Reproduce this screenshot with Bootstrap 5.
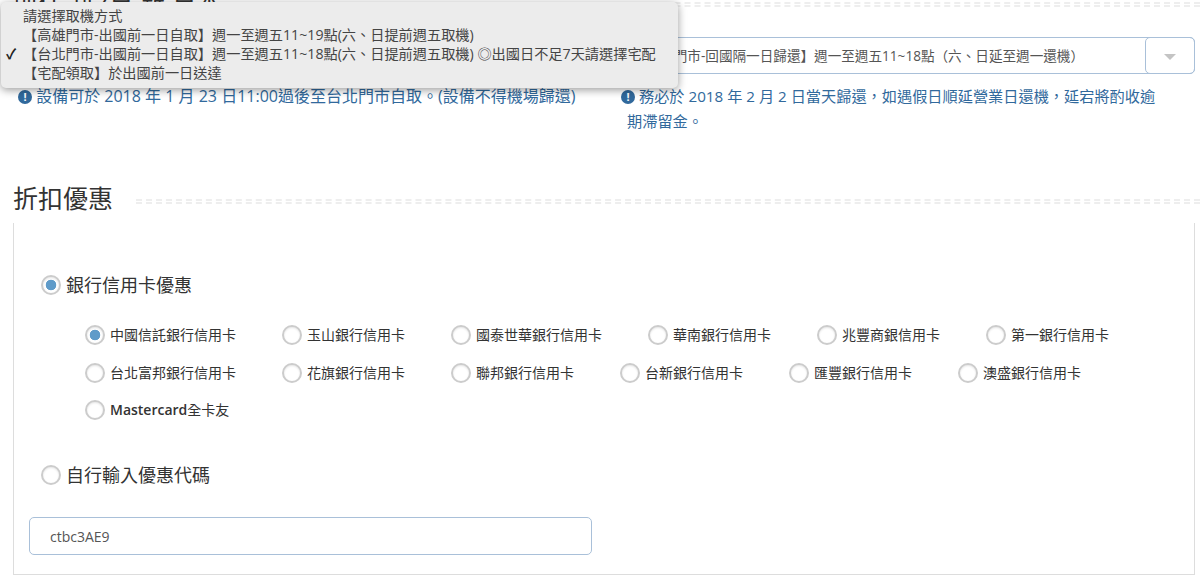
<!DOCTYPE html>
<html lang="zh-Hant">
<head>
  <meta charset="UTF-8">
  <meta name="viewport" content="width=device-width, initial-scale=1.0">
  <title>折扣優惠</title>
  <link rel="stylesheet" href="https://cdn.jsdelivr.net/npm/bootstrap@5.3.0/dist/css/bootstrap.min.css">
  <style>
    body {
      font-family: "Open Sans", "Noto Sans CJK TC", sans-serif;
      color: #333;
      overflow: hidden;
      height: 582px;
    }
    .page-wrap {
      position: relative;
      height: 582px;
      overflow: hidden;
    }
    .sec-head {
      display: flex;
      align-items: center;
      margin-left: 13px;
    }
    .sec-title {
      font-size: 25px;
      line-height: 34px;
      padding-right: 23px;
      white-space: nowrap;
    }
    .sec-rule {
      flex: 1;
      height: 5px;
      margin-top: 6px;
      border-top: 2px dashed #eee;
      border-bottom: 2px dashed #eee;
    }
    .head-top {
      margin-top: -16px;
    }
    .head-discount {
      margin-top: 47px;
    }
    .pick-row {
      margin-top: 19px;
      padding-left: 600px;
    }
    .fake-select {
      height: 37px;
      width: 595px;
      border: 1px solid #a9c0d9;
      border-radius: 5px;
      font-size: 13.6px;
      line-height: 35px;
      padding-left: 32px;
      color: #555;
      position: relative;
      white-space: nowrap;
    }
    .fake-arrow {
      position: absolute;
      right: -1px;
      top: -1px;
      width: 50px;
      height: 37px;
      border: 1px solid #a9c0d9;
      border-radius: 5px;
    }
    .fake-arrow::after {
      content: "";
      position: absolute;
      left: 18px;
      top: 16px;
      border-left: 6px solid transparent;
      border-right: 6px solid transparent;
      border-top: 6px solid #c4c4c4;
    }
    .note-row {
      margin-top: 10px;
      color: #31699c;
      line-height: 25px;
    }
    .note-left {
      width: 620px;
      padding-left: 18px;
      font-size: 16px;
    }
    .note-right {
      width: 548px;
      padding: 0 6px 0 7px;
      text-indent: -6px;
      font-size: 15.2px;
    }
    .note-icon {
      display: inline-block;
      width: 14px;
      height: 14px;
      border-radius: 50%;
      background: #31699c;
      color: #fff;
      font-size: 11px;
      font-weight: 700;
      line-height: 14px;
      text-align: center;
      text-indent: 0;
      vertical-align: 1px;
    }
    .disc-box {
      margin: 8px 5px 0 13px;
      height: 352px;
      border: 1px solid #ddd;
      border-top: 0;
      padding: 49px 0 0 27px;
    }
    .opt-big {
      font-size: 18px;
      line-height: 26px;
      display: flex;
      align-items: center;
      gap: 5px;
    }
    .disc-own {
      margin-top: 39px;
    }
    .form-check-input[type=radio] {
      flex: none;
      width: 20px;
      height: 20px;
      margin: 0;
      border: 2px solid #ccc;
      box-shadow: inset 0 1px 2px rgba(0, 0, 0, .1);
    }
    .form-check-input:checked[type=radio] {
      background-color: #fff;
      border-color: #ccc;
      background-image: radial-gradient(circle, #5f9bc9 0, #5f9bc9 5px, #fff 5.6px);
    }
    .bank-grid {
      margin: 24px 0 0 44px;
      display: flex;
      flex-wrap: wrap;
      column-gap: 46px;
      row-gap: 11.5px;
    }
    .bank-opt {
      display: flex;
      align-items: center;
      gap: 5px;
      font-size: 14px;
      line-height: 26px;
    }
    .bank-brand {
      font-weight: 600;
    }
    .code-box {
      margin: 29px 0 0 -12px;
      width: 563px;
      height: 38px;
      border: 1px solid #a9c0d9;
      border-radius: 5px;
      font-size: 14px;
      padding: 0 20px;
      color: #555;
    }
    .pop-menu {
      position: absolute;
      left: 1px;
      top: 2px;
      width: 677px;
      height: 86px;
      background: #ececec;
      border-radius: 5px;
      box-shadow: 0 2px 8px rgba(0, 0, 0, .4);
      font-size: 14.2px;
      line-height: 19px;
      padding-top: 4px;
      color: #444;
    }
    .pop-item {
      padding-left: 22px;
      position: relative;
      white-space: nowrap;
    }
    .pop-check {
      position: absolute;
      left: 5px;
      top: 0;
      font-weight: 700;
      color: #222;
    }
  </style>
</head>
<body>
  <div class="page-wrap">
    <div class="sec-head head-top">
      <div class="sec-title">前往 新2日 離 日本</div>
      <div class="sec-rule"></div>
    </div>

    <div class="pick-row">
      <div class="fake-select">
        【台北門市-回國隔一日歸還】週一至週五11~18點（六、日延至週一還機）
        <span class="fake-arrow"></span>
      </div>
    </div>

    <div class="d-flex note-row">
      <div class="note-left"><span class="note-icon">!</span> 設備可於 2018 年 1 月 23 日11:00過後至台北門市自取。(設備不得機場歸還)</div>
      <div class="note-right"><span class="note-icon">!</span> 務必於 2018 年 2 月 2 日當天歸還，如遇假日順延營業日還機，延宕將酌收逾期滯留金。</div>
    </div>

    <div class="sec-head head-discount">
      <div class="sec-title">折扣優惠</div>
      <div class="sec-rule"></div>
    </div>

    <div class="disc-box">
      <label class="opt-big"><input class="form-check-input" type="radio" name="disc" checked>銀行信用卡優惠</label>
      <div class="bank-grid">
        <label class="bank-opt"><input class="form-check-input" type="radio" name="bank" checked>中國信託銀行信用卡</label>
        <label class="bank-opt"><input class="form-check-input" type="radio" name="bank">玉山銀行信用卡</label>
        <label class="bank-opt"><input class="form-check-input" type="radio" name="bank">國泰世華銀行信用卡</label>
        <label class="bank-opt"><input class="form-check-input" type="radio" name="bank">華南銀行信用卡</label>
        <label class="bank-opt"><input class="form-check-input" type="radio" name="bank">兆豐商銀信用卡</label>
        <label class="bank-opt"><input class="form-check-input" type="radio" name="bank">第一銀行信用卡</label>
        <label class="bank-opt"><input class="form-check-input" type="radio" name="bank">台北富邦銀行信用卡</label>
        <label class="bank-opt"><input class="form-check-input" type="radio" name="bank">花旗銀行信用卡</label>
        <label class="bank-opt"><input class="form-check-input" type="radio" name="bank">聯邦銀行信用卡</label>
        <label class="bank-opt"><input class="form-check-input" type="radio" name="bank">台新銀行信用卡</label>
        <label class="bank-opt"><input class="form-check-input" type="radio" name="bank">匯豐銀行信用卡</label>
        <label class="bank-opt"><input class="form-check-input" type="radio" name="bank">澳盛銀行信用卡</label>
        <label class="bank-opt"><input class="form-check-input" type="radio" name="bank"><span><span class="bank-brand">Mastercard</span>全卡友</span></label>
      </div>
      <label class="opt-big disc-own"><input class="form-check-input" type="radio" name="disc">自行輸入優惠代碼</label>
      <input class="code-box d-block" value="ctbc3AE9">
    </div>

    <div class="pop-menu">
      <div class="pop-item">請選擇取機方式</div>
      <div class="pop-item">【高雄門市-出國前一日自取】週一至週五11~19點(六、日提前週五取機)</div>
      <div class="pop-item"><span class="pop-check">✓</span>【台北門市-出國前一日自取】週一至週五11~18點(六、日提前週五取機) ◎出國日不足7天請選擇宅配</div>
      <div class="pop-item">【宅配領取】於出國前一日送達</div>
    </div>
  </div>
  <script src="https://cdn.jsdelivr.net/npm/bootstrap@5.3.0/dist/js/bootstrap.bundle.min.js"></script>
</body>
</html>
